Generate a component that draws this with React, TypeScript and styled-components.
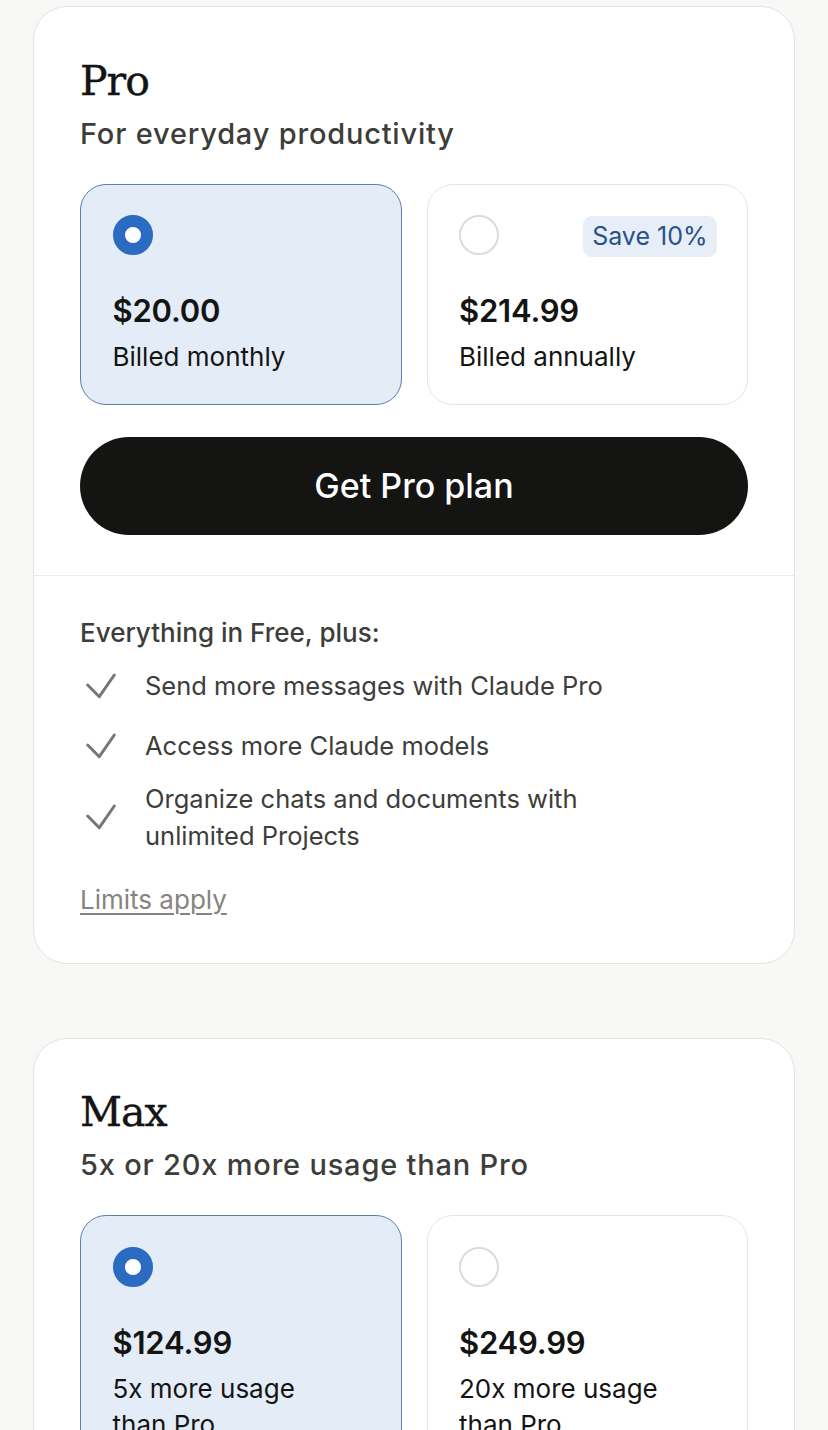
import React from "react";
import styled, { createGlobalStyle } from "styled-components";

const Global = createGlobalStyle`
  html, body {
    margin: 0;
    padding: 0;
    background: #f8f8f6;
  }
  body {
    font-family: Inter, "Noto Sans", sans-serif;
    color: #141413;
  }
`;

const Page = styled.div`
  display: flex;
  flex-direction: column;
  gap: 74px;
  padding: 6px 33px 40px;
`;

const Card = styled.section`
  background: #ffffff;
  border: 1.5px solid #e4e3df;
  border-radius: 34px;
  overflow: hidden;
`;

const Top = styled.div`
  padding: 48.5px 46px 40px;
`;

const Title = styled.h2`
  margin: 0;
  font-family: "DejaVu Serif", "Liberation Serif", serif;
  font-weight: 400;
  font-size: 41px;
  line-height: 50px;
  color: #141413;
  letter-spacing: -1px;
  -webkit-text-stroke: 0.4px #141413;
`;

const Subtitle = styled.p`
  margin: 9px 0 0;
  font-size: 29px;
  font-weight: 500;
  line-height: 38px;
  color: #3d3d3a;
  letter-spacing: 0.8px;
`;

const Options = styled.div`
  display: grid;
  grid-template-columns: 1fr 1fr;
  gap: 25px;
  margin-top: 31px;
`;

const Option = styled.div<{ $selected?: boolean }>`
  min-height: 221px;
  box-sizing: border-box;
  padding: 30.5px 30px 28px 31.5px;
  border-radius: 26px;
  background: ${(p) => (p.$selected ? "#e4ecf7" : "#ffffff")};
  border: 1.5px solid ${(p) => (p.$selected ? "#5c7fae" : "#e6e5e1")};
  display: flex;
  flex-direction: column;
`;

const OptionHead = styled.div`
  display: flex;
  align-items: center;
  justify-content: space-between;
  height: 40px;
`;

const Radio = styled.span<{ $on?: boolean }>`
  width: 40px;
  height: 40px;
  box-sizing: border-box;
  border-radius: 50%;
  display: inline-block;
  background: #ffffff;
  border: ${(p) => (p.$on ? "12.5px solid #2c6bc2" : "2px solid #dcdbd7")};
`;

const Badge = styled.span`
  background: #e7eef8;
  color: #2a5189;
  font-size: 25px;
  line-height: 41px;
  padding: 0 9.5px;
  border-radius: 9px;
  margin-top: 2px;
`;

const Price = styled.div`
  margin-top: 36px;
  font-size: 31px;
  font-weight: 600;
  line-height: 40px;
  color: #141413;
  letter-spacing: -0.2px;
`;

const Billing = styled.div`
  margin-top: 8px;
  max-width: 215px;
  font-size: 26px;
  line-height: 36px;
  color: #141413;
`;

const CTA = styled.button`
  display: block;
  width: 100%;
  margin-top: 32px;
  height: 98px;
  border: none;
  border-radius: 49px;
  background: #141413;
  color: #ffffff;
  font-family: Inter, "Noto Sans", sans-serif;
  font-size: 34px;
  font-weight: 500;
  cursor: pointer;
`;

const Divider = styled.hr`
  margin: 0;
  border: none;
  border-top: 1.5px solid #ebeae6;
`;

const Features = styled.div`
  padding: 39px 46px 45px;
`;

const FeatHead = styled.div`
  font-size: 26px;
  font-weight: 500;
  line-height: 36px;
  color: #3d3d3a;
`;

const List = styled.ul`
  list-style: none;
  margin: 9px 0 0;
  padding: 0;
  display: flex;
  flex-direction: column;
  gap: 8px;
`;

const Item = styled.li`
  display: flex;
  align-items: center;
  gap: 21px;
  min-height: 52px;
  font-size: 25.5px;
  line-height: 37px;
  color: #3d3d3a;
`;

const ItemText = styled.span`
  max-width: 470px;
`;

const Check = styled.svg`
  flex: none;
  width: 44px;
  height: 52px;
`;

const Limits = styled.a`
  display: inline-block;
  margin-top: 28px;
  font-size: 26px;
  line-height: 36px;
  color: #858480;
  text-decoration: underline;
  text-underline-offset: 4px;
  text-decoration-thickness: 1.5px;
`;

const CheckIcon = () => (
  <Check viewBox="0 0 44 52" fill="none">
    <path
      d="M7.7 25 L19.3 36.7 L34.3 15"
      stroke="#777672"
      strokeWidth="3"
      strokeLinecap="round"
      strokeLinejoin="round"
    />
  </Check>
);

type Opt = { price: string; note: string; selected?: boolean; badge?: string };

const PlanOption = ({ price, note, selected, badge }: Opt) => (
  <Option $selected={selected}>
    <OptionHead>
      <Radio $on={selected} />
      {badge && <Badge>{badge}</Badge>}
    </OptionHead>
    <Price>{price}</Price>
    <Billing>{note}</Billing>
  </Option>
);

const features = [
  "Send more messages with Claude Pro",
  "Access more Claude models",
  "Organize chats and documents with unlimited Projects",
];

export default function App() {
  return (
    <>
      <Global />
      <Page>
        <Card>
          <Top>
            <Title>Pro</Title>
            <Subtitle>For everyday productivity</Subtitle>
            <Options>
              <PlanOption price="$20.00" note="Billed monthly" selected />
              <PlanOption price="$214.99" note="Billed annually" badge="Save 10%" />
            </Options>
            <CTA>Get Pro plan</CTA>
          </Top>
          <Divider />
          <Features>
            <FeatHead>Everything in Free, plus:</FeatHead>
            <List>
              {features.map((f) => (
                <Item key={f}>
                  <CheckIcon />
                  <ItemText>{f}</ItemText>
                </Item>
              ))}
            </List>
            <Limits href="#">Limits apply</Limits>
          </Features>
        </Card>
        <Card>
          <Top>
            <Title>Max</Title>
            <Subtitle>5x or 20x more usage than Pro</Subtitle>
            <Options>
              <PlanOption price="$124.99" note="5x more usage than Pro" selected />
              <PlanOption price="$249.99" note="20x more usage than Pro" />
            </Options>
            <CTA>Get Max plan</CTA>
          </Top>
        </Card>
      </Page>
    </>
  );
}
